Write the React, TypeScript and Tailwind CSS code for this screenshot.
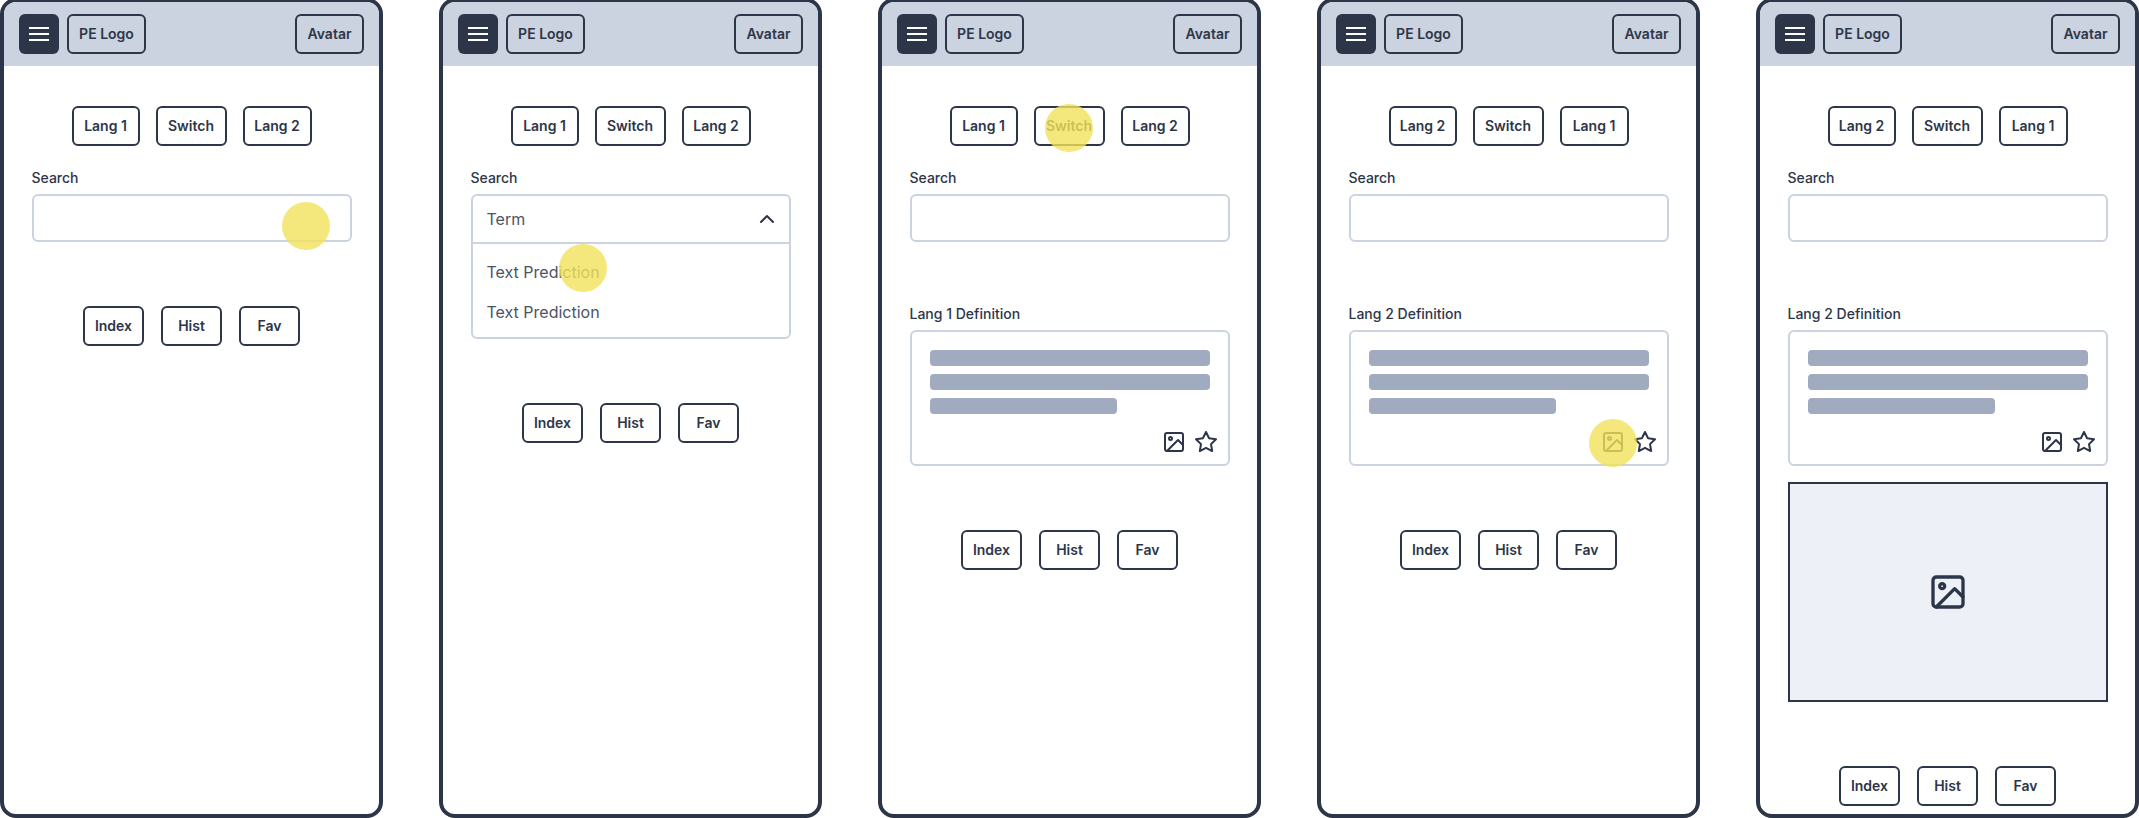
import type { ReactNode } from "react";
import { FiChevronUp, FiImage, FiStar } from "react-icons/fi";

function Outlined({ className, children }: { className: string; children: ReactNode }) {
    return (
        <div
            className={`flex h-10 items-center justify-center rounded-md border-2 border-[#2d3648] text-sm font-semibold text-[#2d3648] ${className}`}
        >
            {children}
        </div>
    );
}

function Tap({ className }: { className: string }) {
    return <div className={`absolute h-12 w-12 rounded-full bg-[#f1e25b]/80 ${className}`} />;
}

function Header() {
    return (
        <div className="flex h-16 shrink-0 items-center justify-between bg-[#cbd2e0] pl-[15px] pr-[15px]">
            <div className="flex items-center gap-2">
                <div className="flex h-10 w-10 items-center justify-center rounded-md bg-[#2d3648]">
                    <svg width="20" height="14" viewBox="0 0 20 14" fill="white">
                        <rect x="0" y="0" width="20" height="2" />
                        <rect x="0" y="6" width="20" height="2" />
                        <rect x="0" y="12" width="20" height="2" />
                    </svg>
                </div>
                <Outlined className="w-[79px]">PE Logo</Outlined>
            </div>
            <Outlined className="w-[69px]">Avatar</Outlined>
        </div>
    );
}

function LangRow({ first, second }: { first: string; second: string }) {
    return (
        <div className="mt-10 flex justify-center gap-4">
            <Outlined className="w-[68px]">{first}</Outlined>
            <Outlined className="w-[71px]">Switch</Outlined>
            <Outlined className="w-[69px]">{second}</Outlined>
        </div>
    );
}

function SearchBox() {
    return (
        <div className="mx-auto mt-[22px] w-80">
            <div className="mb-1.5 text-sm leading-5 font-medium text-[#2d3648]">Search</div>
            <div className="h-12 rounded-md border-2 border-[#cbd2e0]" />
        </div>
    );
}

function SearchOpen() {
    return (
        <div className="mx-auto mt-[22px] w-80">
            <div className="mb-1.5 text-sm leading-5 font-medium text-[#2d3648]">Search</div>
            <div className="rounded-md border-2 border-[#cbd2e0] text-base text-[#4a5468]">
                <div className="flex h-12 items-center justify-between border-b-2 border-[#cbd2e0] pl-[14px] pr-[10px]">
                    <span>Term</span>
                    <FiChevronUp size={24} className="text-[#2d3648]" />
                </div>
                <div className="flex flex-col gap-4 px-[14px] pt-4 pb-[13px]">
                    <div className="leading-6">Text Prediction</div>
                    <div className="leading-6">Text Prediction</div>
                </div>
            </div>
        </div>
    );
}

function Definition({ lang }: { lang: string }) {
    return (
        <div className="mx-auto mt-[62px] w-80">
            <div className="mb-1.5 text-sm leading-5 font-medium text-[#2d3648]">{lang} Definition</div>
            <div className="rounded-md border-2 border-[#cbd2e0] px-[18px] pt-[18px] pb-[10px]">
                <div className="flex flex-col gap-2">
                    <div className="h-4 rounded-sm bg-[#a0abc0]" />
                    <div className="h-4 rounded-sm bg-[#a0abc0]" />
                    <div className="h-4 w-[187px] rounded-sm bg-[#a0abc0]" />
                </div>
                <div className="-mr-2 mt-4 flex justify-end gap-2 text-[#2d3648]">
                    <FiImage size={24} />
                    <FiStar size={24} />
                </div>
            </div>
        </div>
    );
}

function BottomNav() {
    return (
        <div className="mt-16 flex justify-center gap-[17px]">
            <Outlined className="w-[61px]">Index</Outlined>
            <Outlined className="w-[61px]">Hist</Outlined>
            <Outlined className="w-[61px]">Fav</Outlined>
        </div>
    );
}

function Phone({ children }: { children: ReactNode }) {
    return (
        <div className="relative flex h-[820px] w-[383px] shrink-0 flex-col overflow-hidden rounded-2xl border-4 border-[#2d3648] bg-white">
            <Header />
            {children}
        </div>
    );
}

export default function App() {
    return (
        <div
            className="h-[818px] w-[2139px] overflow-hidden bg-white"
            style={{ fontFamily: "Inter, sans-serif" }}
        >
            <div className="-mt-0.5 flex w-full justify-between">
                <Phone>
                    <LangRow first="Lang 1" second="Lang 2" />
                    <SearchBox />
                    <BottomNav />
                    <Tap className="left-[278px] top-[200px]" />
                </Phone>

                <Phone>
                    <LangRow first="Lang 1" second="Lang 2" />
                    <SearchOpen />
                    <BottomNav />
                    <Tap className="left-[116px] top-[242px]" />
                </Phone>

                <Phone>
                    <LangRow first="Lang 1" second="Lang 2" />
                    <SearchBox />
                    <Definition lang="Lang 1" />
                    <BottomNav />
                    <Tap className="left-[163px] top-[102px]" />
                </Phone>

                <Phone>
                    <LangRow first="Lang 2" second="Lang 1" />
                    <SearchBox />
                    <Definition lang="Lang 2" />
                    <BottomNav />
                    <Tap className="left-[268px] top-[417px]" />
                </Phone>

                <Phone>
                    <LangRow first="Lang 2" second="Lang 1" />
                    <SearchBox />
                    <Definition lang="Lang 2" />
                    <div className="mx-auto mt-4 flex h-[220px] w-80 items-center justify-center border-2 border-[#2d3648] bg-[#edf0f7] text-[#2d3648]">
                        <FiImage size={40} />
                    </div>
                    <BottomNav />
                </Phone>
            </div>
        </div>
    );
}
